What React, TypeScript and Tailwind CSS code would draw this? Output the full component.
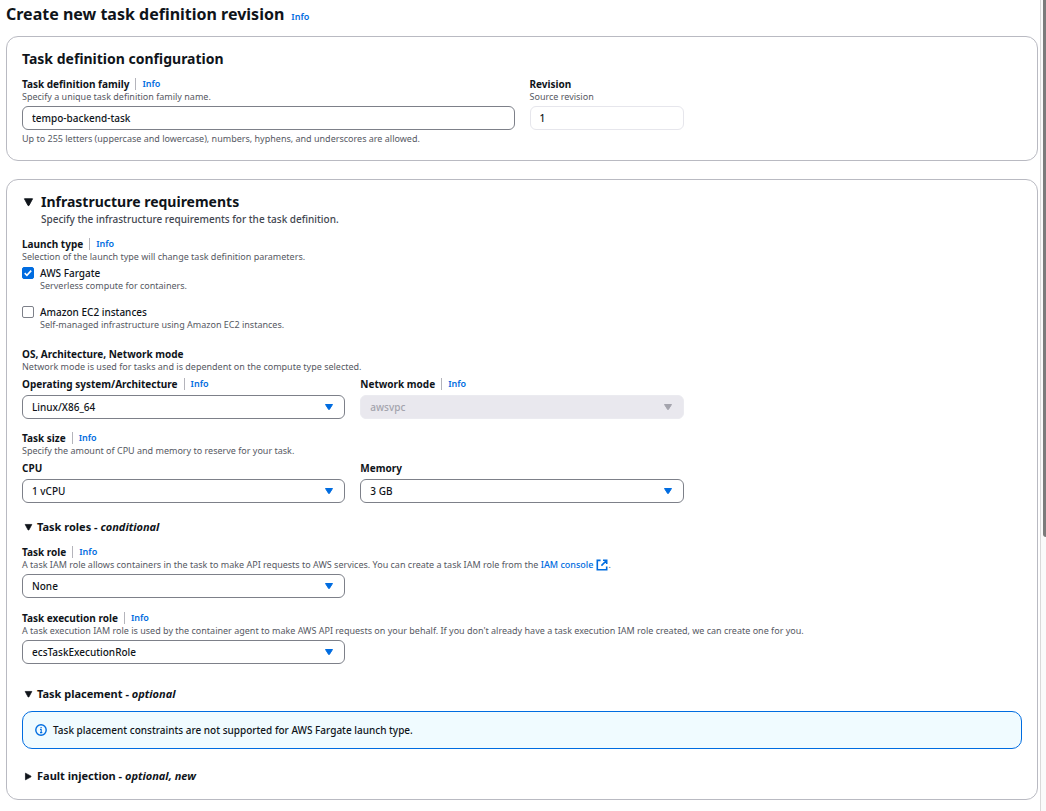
import { useId, useState, type ReactNode } from "react";

function Info() {
  return (
    <a href="#info" className="text-[9px] leading-[14px] font-semibold text-[#006ce0]">
      Info
    </a>
  );
}

function Label({ children, htmlFor, info }: { children: ReactNode; htmlFor?: string; info?: boolean }) {
  const text = "text-[10px] leading-[14px] font-bold text-[#0f141a]";
  return (
    <div className="flex h-[14px] items-center whitespace-nowrap">
      {htmlFor ? (
        <label htmlFor={htmlFor} className={text}>
          {children}
        </label>
      ) : (
        <h3 className={text}>{children}</h3>
      )}
      {info && (
        <span className="ml-[6px] flex h-[12px] items-center border-l border-[#b4b4bb] pl-[6px]">
          <Info />
        </span>
      )}
    </div>
  );
}

function Description({ children }: { children: ReactNode }) {
  return <p className="text-[9px] leading-[12px] whitespace-nowrap text-[#565963]">{children}</p>;
}

function SelectBox({ id, value, disabled }: { id: string; value: string; disabled?: boolean }) {
  return (
    <div className="relative">
      <select
        id={id}
        disabled={disabled}
        defaultValue={value}
        className="block h-[24px] w-full appearance-none rounded-[6px] border border-[#7d8089] bg-white pr-8 pl-[9px] text-[10px] leading-[16px] font-medium text-[#0f141a] disabled:border-[#ebebf0] disabled:bg-[#e9e8ee] disabled:text-[#a4a4ad] disabled:opacity-100"
      >
        <option>{value}</option>
      </select>
      <svg
        viewBox="0 0 8 6"
        className={`pointer-events-none absolute top-[9px] right-[12px] h-[6px] w-[8px] ${disabled ? "text-[#a4a4ad]" : "text-[#006ce0]"}`}
        aria-hidden="true"
      >
        <path d="M.5.5h7L4.4 5.4H3.6z" fill="currentColor" stroke="currentColor" strokeLinejoin="round" />
      </svg>
    </div>
  );
}

function Field({
  label,
  info,
  description,
  value,
  disabled,
}: {
  label: string;
  info?: boolean;
  description?: ReactNode;
  value: string;
  disabled?: boolean;
}) {
  const id = useId();
  return (
    <div className="col-span-2">
      <Label htmlFor={id} info={info}>
        {label}
      </Label>
      {description && <Description>{description}</Description>}
      <div className={description ? "mt-[3px]" : "mt-[4px]"}>
        <SelectBox id={id} value={value} disabled={disabled} />
      </div>
    </div>
  );
}

function Caret({ open, large }: { open: boolean; large?: boolean }) {
  return (
    <svg
      viewBox="0 0 10 10"
      className={`shrink-0 ${large ? "h-[11px] w-[11px]" : "h-[9px] w-[9px]"} ${open ? "" : "-rotate-90"}`}
      aria-hidden="true"
    >
      <path d="M1.3 1.6h7.4L5.4 7.8h-.8z" fill="currentColor" stroke="currentColor" strokeWidth=".8" strokeLinejoin="round" />
    </svg>
  );
}

function Section({
  title,
  note,
  initiallyOpen,
  children,
}: {
  title: string;
  note: string;
  initiallyOpen?: boolean;
  children?: ReactNode;
}) {
  const [open, setOpen] = useState(Boolean(initiallyOpen));
  return (
    <section>
      <h3>
        <button
          type="button"
          aria-expanded={open}
          onClick={() => setOpen(!open)}
          className="flex h-[16px] items-center gap-[4px] pl-[2px] text-[11px] leading-[16px] font-bold text-[#0f141a]"
        >
          <Caret open={open} />
          <span>
            {title} - <em>{note}</em>
          </span>
        </button>
      </h3>
      {open && children}
    </section>
  );
}

function Check({ label, description, checked }: { label: string; description: string; checked?: boolean }) {
  const id = useId();
  return (
    <div className="grid grid-cols-[12px_1fr] gap-x-[6px]">
      <span className="relative flex h-[14px] items-center">
        <input
          id={id}
          type="checkbox"
          defaultChecked={checked}
          className="peer size-[12px] appearance-none rounded-[2px] border border-[#7d8089] bg-white checked:border-[#006ce0] checked:bg-[#006ce0]"
        />
        <svg
          viewBox="0 0 12 12"
          className="pointer-events-none absolute top-[1px] left-0 hidden size-[12px] peer-checked:block"
          aria-hidden="true"
        >
          <path d="M2.7 6.2l2.2 2.1L9.2 3.6" fill="none" stroke="white" strokeWidth="1.6" />
        </svg>
      </span>
      <label htmlFor={id} className="text-[10px] leading-[14px] font-medium text-[#0f141a]">
        {label}
      </label>
      <div className="col-start-2">
        <Description>{description}</Description>
      </div>
    </div>
  );
}

function Card({ children }: { children: ReactNode }) {
  return <section className="rounded-[12px] border border-[#b9bac2] bg-white px-[15px] pt-[12px] pb-[15px]">{children}</section>;
}

function ExternalIcon() {
  return (
    <svg viewBox="0 0 12 12" className="ml-[3px] inline-block size-[12px] align-[-3px]" aria-hidden="true">
      <path d="M4.6 1.4H1.3v9.4h9.4V7.4M7 1.3h3.7V5M10.5 1.5L5.4 6.6" fill="none" stroke="currentColor" strokeWidth="1.6" />
    </svg>
  );
}

export default function App() {
  return (
    <div className="flex min-h-screen bg-white font-['Noto_Sans','Open_Sans',sans-serif] text-[#0f141a]">
      <main className="min-w-0 flex-1 pr-[2px] pb-[11px] pl-[6px]">
        <header className="flex h-[28px] items-baseline gap-[7px]">
          <h1 className="text-[16px] leading-[28px] font-bold">Create new task definition revision</h1>
          <Info />
        </header>

        <div className="mt-[8px] flex flex-col gap-[18px]">
          <Card>
            <h2 className="text-[14px] leading-[20px] font-bold">Task definition configuration</h2>
            <div className="mt-[8px] grid grid-cols-6 gap-x-[15px]">
              <div className="col-span-3">
                <Label htmlFor="family" info>
                  Task definition family
                </Label>
                <Description>Specify a unique task definition family name.</Description>
                <input
                  id="family"
                  defaultValue="tempo-backend-task"
                  className="mt-[3px] mb-[3px] block h-[24px] w-full rounded-[6px] border border-[#7d8089] px-[9px] text-[10px] font-medium"
                />
                <Description>
                  Up to 255 letters (uppercase and lowercase), numbers, hyphens, and underscores are allowed.
                </Description>
              </div>
              <div>
                <Label htmlFor="revision">Revision</Label>
                <Description>Source revision</Description>
                <input
                  id="revision"
                  readOnly
                  value="1"
                  className="mt-[3px] block h-[24px] w-full rounded-[6px] border border-[#e6e6ec] px-[9px] text-[10px] font-medium"
                />
              </div>
            </div>
          </Card>

          <Card>
            <div className="grid grid-cols-[13px_1fr] items-center gap-x-[6px]">
              <span className="flex pl-[1px]">
                <Caret open large />
              </span>
              <h2 className="text-[14px] leading-[20px] font-bold">Infrastructure requirements</h2>
              <p className="col-start-2 text-[10px] leading-[14px] font-medium text-[#424650]">
                Specify the infrastructure requirements for the task definition.
              </p>
            </div>

            <div className="mt-[11px]">
              <Label info>Launch type</Label>
              <Description>Selection of the launch type will change task definition parameters.</Description>
              <div className="mt-[3px] flex flex-col gap-[13px]">
                <Check label="AWS Fargate" description="Serverless compute for containers." checked />
                <Check
                  label="Amazon EC2 instances"
                  description="Self-managed infrastructure using Amazon EC2 instances."
                />
              </div>
            </div>

            <div className="mt-[16px]">
              <Label>OS, Architecture, Network mode</Label>
              <Description>Network mode is used for tasks and is dependent on the compute type selected.</Description>
              <div className="mt-[4px] grid grid-cols-6 gap-x-[15px]">
                <Field label="Operating system/Architecture" info value="Linux/X86_64" />
                <Field label="Network mode" info value="awsvpc" disabled />
              </div>
            </div>

            <div className="mt-[12px] mb-[16px]">
              <Label info>Task size</Label>
              <Description>Specify the amount of CPU and memory to reserve for your task.</Description>
              <div className="mt-[4px] grid grid-cols-6 gap-x-[15px]">
                <Field label="CPU" value="1 vCPU" />
                <Field label="Memory" value="3 GB" />
              </div>
            </div>

            <Section title="Task roles" note="conditional" initiallyOpen>
              <div className="mt-[10px] mb-[22px] grid grid-cols-6 gap-x-[15px] gap-y-[13px]">
                <Field
                  label="Task role"
                  info
                  value="None"
                  description={
                    <>
                      A task IAM role allows containers in the task to make API requests to AWS services. You can create a
                      task IAM role from the{" "}
                      <a href="#iam" className="font-medium text-[#006ce0]">
                        IAM console
                        <ExternalIcon />
                      </a>
                      .
                    </>
                  }
                />
                <div className="col-span-4" />
                <Field
                  label="Task execution role"
                  info
                  value="ecsTaskExecutionRole"
                  description="A task execution IAM role is used by the container agent to make AWS API requests on your behalf. If you don't already have a task execution IAM role created, we can create one for you."
                />
              </div>
            </Section>

            <Section title="Task placement" note="optional" initiallyOpen>
              <div className="mt-[9px] mb-[19px] flex h-[38px] items-center gap-[6px] rounded-[10px] border border-[#006ce0] bg-[#f0fbff] px-[12px]">
                <svg viewBox="0 0 12 12" className="size-[12px] text-[#006ce0]" aria-hidden="true">
                  <circle cx="6" cy="6" r="5.2" fill="none" stroke="currentColor" strokeWidth="1.4" />
                  <path d="M5 5.4h1.2v3.2M5 8.6h2.3M5.5 3.5h1.2" fill="none" stroke="currentColor" strokeWidth="1.1" />
                </svg>
                <p className="text-[10px] leading-[14px] font-medium">
                  Task placement constraints are not supported for AWS Fargate launch type.
                </p>
              </div>
            </Section>

            <Section title="Fault injection" note="optional, new" />
          </Card>
        </div>
      </main>

      <div className="w-[6px] shrink-0 border-l border-[#d9d9d9] bg-[#fafafa] pl-[2px]" aria-hidden="true">
        <div className="h-[537px] rounded-bl-[3px] bg-[#7b7b7b]" />
      </div>
    </div>
  );
}
